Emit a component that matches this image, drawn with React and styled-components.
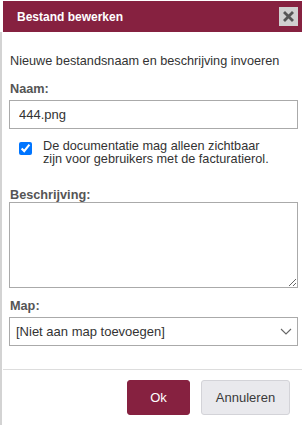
import React from "react";
import styled, { createGlobalStyle } from "styled-components";

const Global = createGlobalStyle`
  html, body { margin: 0; padding: 0; background: #fff; }
  body { font-family: "Liberation Sans", Arial, sans-serif; color: #333; }
  * { box-sizing: border-box; }
`;

const Dialog = styled.div`
  width: 302px;
  height: 425px;
  padding-top: 1px;
  display: flex;
  flex-direction: column;
  overflow: hidden;
`;

const Header = styled.div`
  height: 31px;
  margin-left: 3px;
  flex: none;
  background: #862140;
  display: flex;
  align-items: center;
  justify-content: space-between;
  padding: 0 4px 0 14px;
`;

const Title = styled.span`
  color: #fff;
  font-weight: bold;
  font-size: 12px;
`;

const CloseButton = styled.button`
  width: 19px;
  height: 19px;
  padding: 0;
  border: none;
  background: #d0d0d0;
  display: flex;
  align-items: center;
  justify-content: center;
`;

const Content = styled.div`
  flex: 1;
  border-left: 2px solid #d3d3d3;
  padding-left: 1px;
  display: flex;
  flex-direction: column;
`;

const Body = styled.div`
  padding: 22px 4px 0 6px;
  display: flex;
  flex-direction: column;
`;

const Intro = styled.p`
  margin: 0 0 14px 1px;
  font-size: 12.7px;
  line-height: 14px;
  color: #333;
`;

const Label = styled.label`
  display: block;
  font-weight: bold;
  font-size: 12.7px;
  line-height: 14px;
  color: #555;
  margin: 0 0 ${(p) => (p.$tight ? 0 : 4)}px 1px;
`;

const TextInput = styled.input`
  display: block;
  width: 100%;
  height: 29px;
  border: 1px solid #aaa;
  padding: 0 9px;
  font: 13px "Liberation Sans", Arial, sans-serif;
  color: #333;
  outline: none;
`;

const CheckRow = styled.label`
  display: flex;
  align-items: flex-start;
  gap: 11px;
  padding: 11px 0 0 10px;
  font-size: 12.7px;
  line-height: 13px;
  color: #333;
  margin-bottom: 22px;
`;

const Check = styled.input`
  width: 13px;
  height: 13px;
  margin: 2px 0 0 0;
  flex: none;
  accent-color: #0075ff;
`;

const TextArea = styled.textarea`
  display: block;
  width: 100%;
  height: 86px;
  border: 1px solid #aaa;
  resize: both;
  font: 13px "Liberation Sans", Arial, sans-serif;
  outline: none;
  margin-bottom: 11px;
`;

const Select = styled.div`
  height: 29px;
  border: 1px solid #aaa;
  display: flex;
  align-items: center;
  justify-content: space-between;
  padding: 0 5px 0 6px;
  font-size: 13px;
  color: #333;
`;

const Divider = styled.div`
  height: 1px;
  background: #ddd;
  margin-top: 23px;
`;

const Footer = styled.div`
  display: flex;
  justify-content: flex-end;
  gap: 11px;
  padding: 10px 12px 0 0;
`;

const Button = styled.button`
  height: 35px;
  width: ${(p) => p.$w}px;
  border-radius: 3px;
  font: 13px "Liberation Sans", Arial, sans-serif;
  border: 1px solid ${(p) => (p.$primary ? "#862140" : "#d3d3d8")};
  background: ${(p) => (p.$primary ? "#862140" : "#e9e9ed")};
  color: ${(p) => (p.$primary ? "#fff" : "#3a3a3a")};
`;

export default function App() {
  return (
    <>
      <Global />
      <Dialog>
        <Header>
          <Title>Bestand bewerken</Title>
          <CloseButton aria-label="close">
            <svg width="11" height="11" viewBox="0 0 11 11">
              <path d="M2 2 L9 9 M9 2 L2 9" stroke="#555" strokeWidth="2.8" strokeLinecap="square" />
            </svg>
          </CloseButton>
        </Header>
        <Content>
          <Body>
            <Intro>Nieuwe bestandsnaam en beschrijving invoeren</Intro>
            <Label>Naam:</Label>
            <TextInput defaultValue="444.png" />
            <CheckRow>
              <Check type="checkbox" defaultChecked />
              <span>
                De documentatie mag alleen zichtbaar
                <br />
                zijn voor gebruikers met de facturatierol.
              </span>
            </CheckRow>
            <Label $tight>Beschrijving:</Label>
            <TextArea />
            <Label>Map:</Label>
            <Select>
              <span>[Niet aan map toevoegen]</span>
              <svg width="12" height="7" viewBox="0 0 12 7">
                <path d="M1 1 L6 6 L11 1" fill="none" stroke="#666" strokeWidth="1.1" />
              </svg>
            </Select>
          </Body>
          <Divider />
          <Footer>
            <Button $primary $w={63}>Ok</Button>
            <Button $w={89}>Annuleren</Button>
          </Footer>
        </Content>
      </Dialog>
    </>
  );
}
